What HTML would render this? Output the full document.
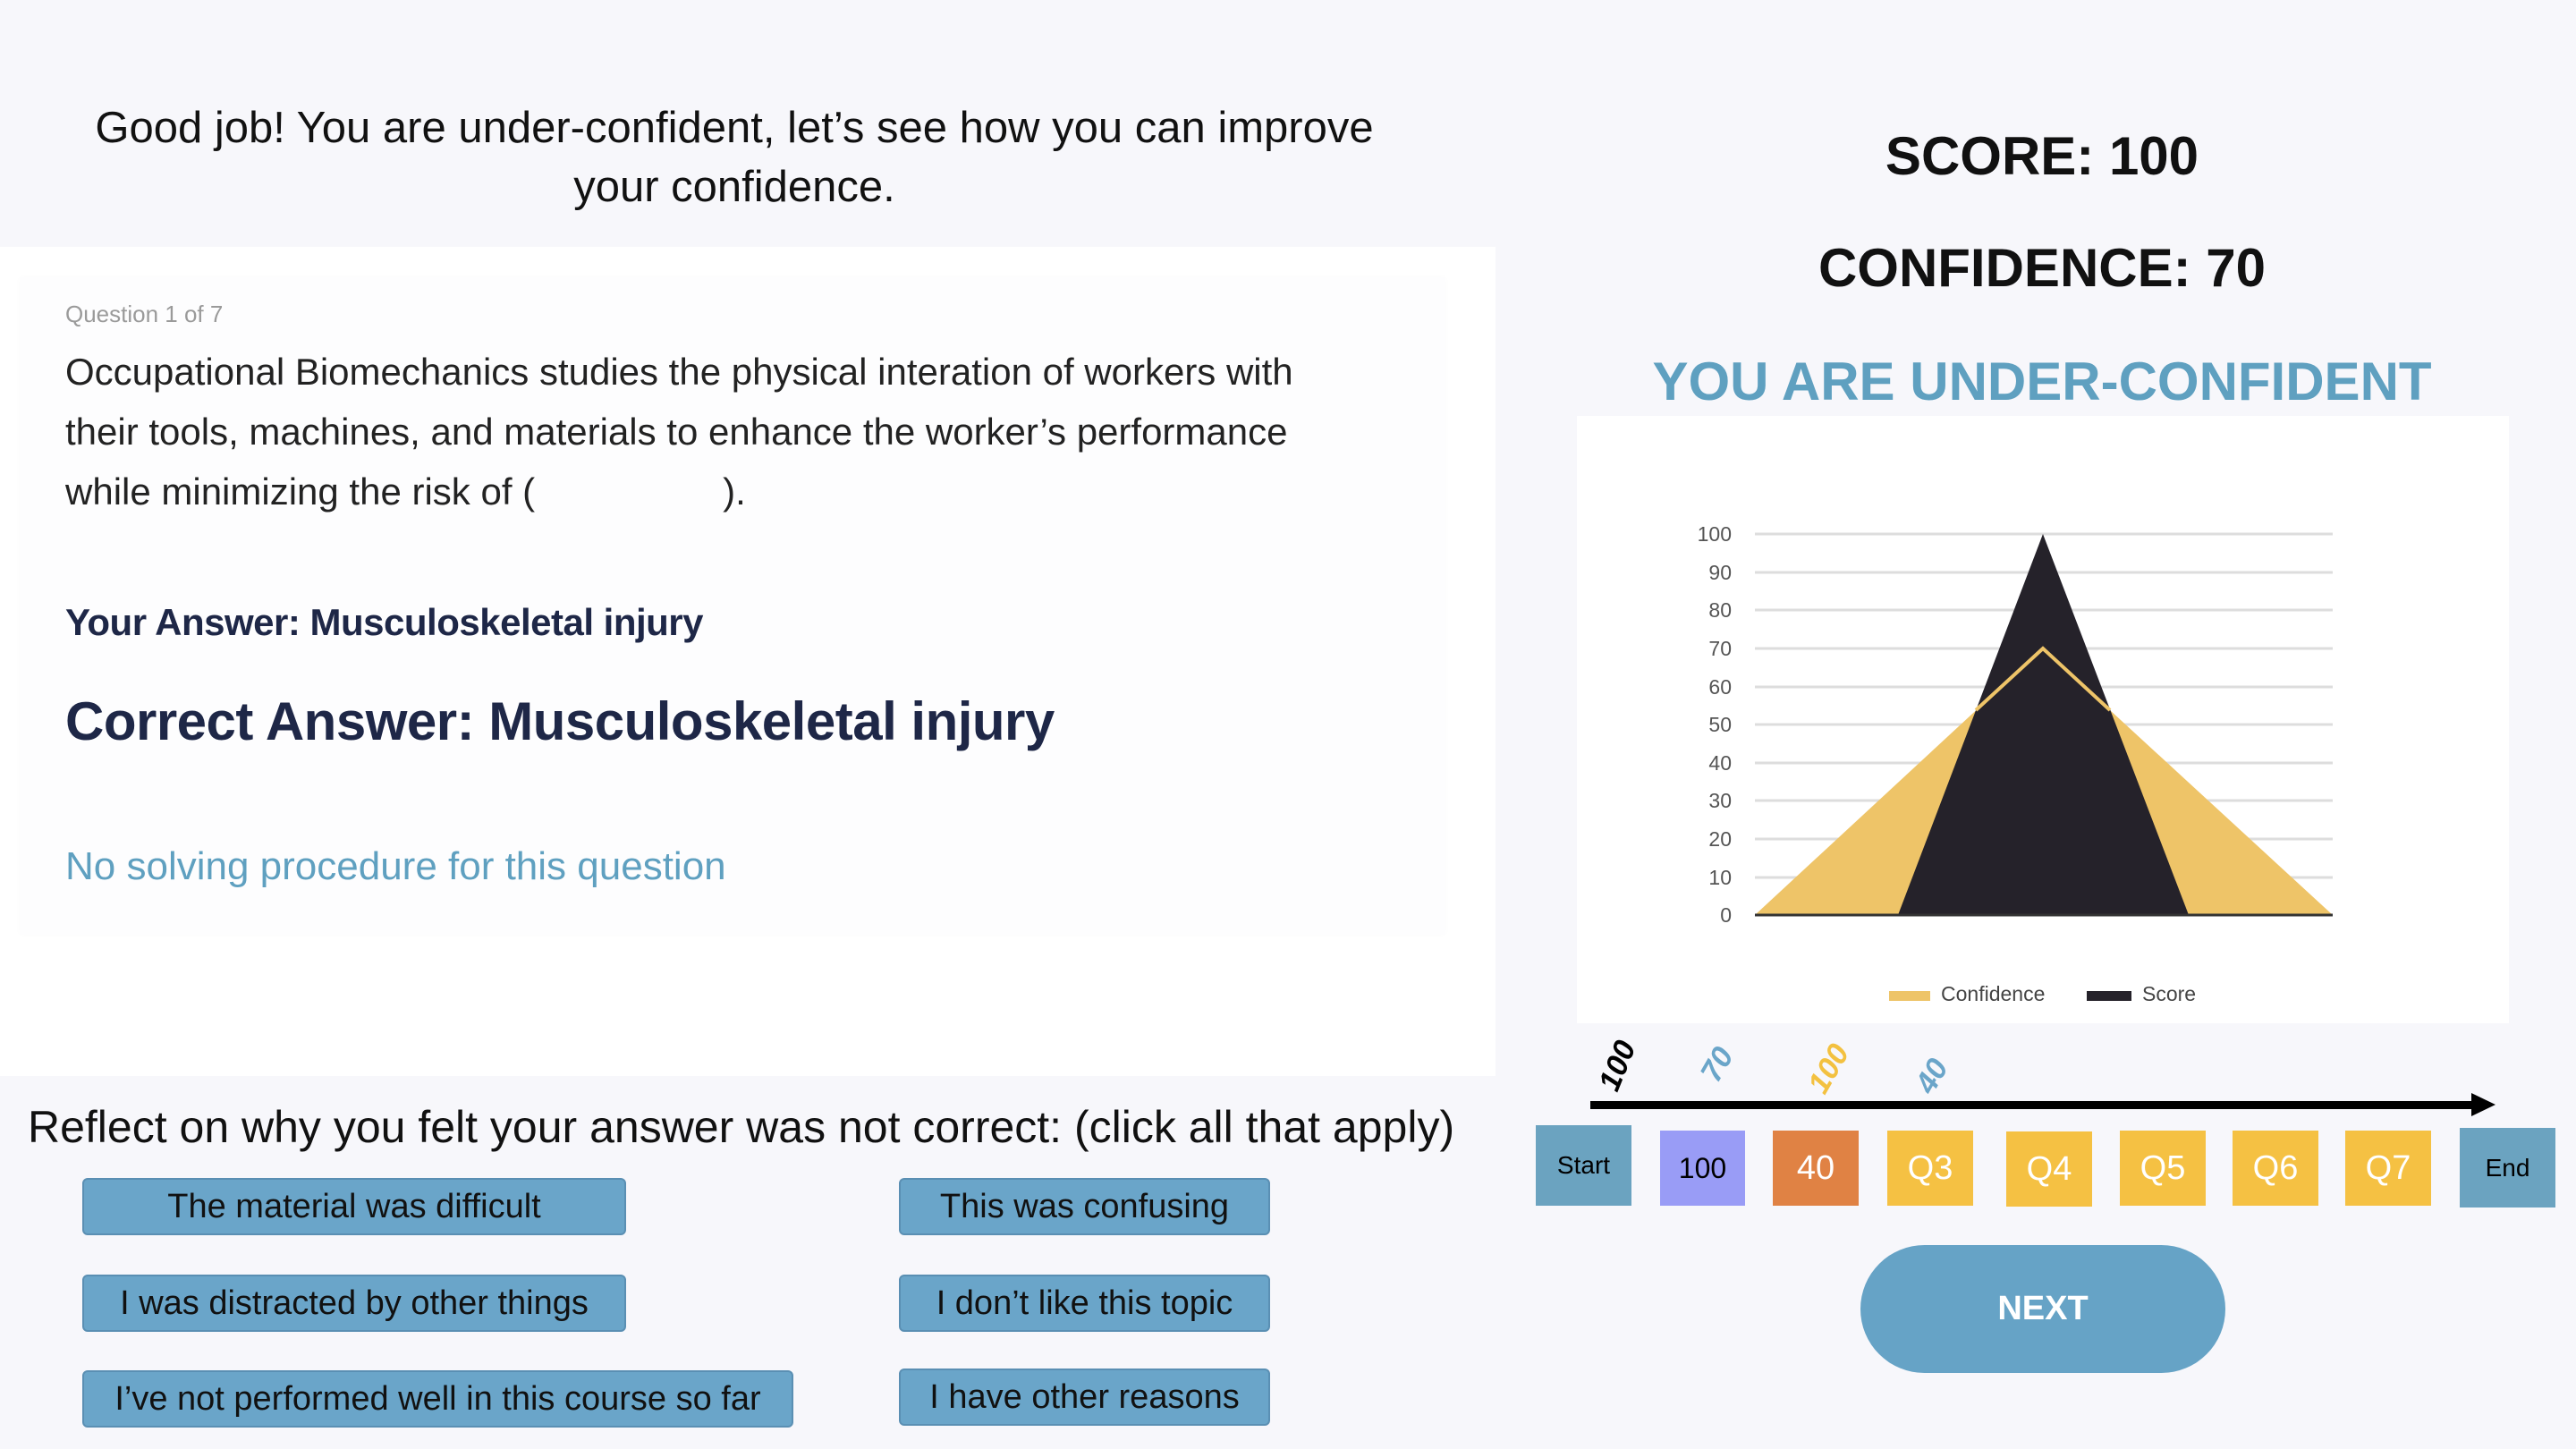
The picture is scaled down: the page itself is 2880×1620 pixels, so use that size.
<!DOCTYPE html>
<html><head><meta charset="utf-8"><style>
*{margin:0;padding:0;box-sizing:border-box}
body{width:2880px;height:1620px;background:#f7f7fb;position:relative;overflow:hidden;font-family:"Liberation Sans",sans-serif;color:#111}
.a{position:absolute;white-space:nowrap}
.btn{position:absolute;background:#6aa5c9;border:2px solid #5a8fb3;border-radius:6px;font-size:38px;color:#111;text-align:center;line-height:60px}
.box{position:absolute;font-size:38px;text-align:center;color:#fff}
</style></head><body>
<div class="a" style="left:0;top:110px;width:1642px;text-align:center;font-size:49px;line-height:66px;white-space:normal">Good job! You are under-confident, let’s see how you can improve<br>your confidence.</div>
<div class="a" style="left:0;top:276px;width:1672px;height:927px;background:#fff"></div>
<div class="a" style="left:22px;top:310px;width:1594px;height:735px;background:#fdfdfe;box-shadow:0 0 6px rgba(0,0,0,0.02)"></div>
<div class="a" style="left:73px;top:336px;font-size:26px;color:#9a9a9a">Question 1 of 7</div>
<div class="a" style="left:73px;top:382px;font-size:42px;line-height:67px;color:#222">Occupational Biomechanics studies the physical interation of workers with<br>their tools, machines, and materials to enhance the worker’s performance<br>while minimizing the risk of (&nbsp;&nbsp;&nbsp;&nbsp;&nbsp;&nbsp;&nbsp;&nbsp;&nbsp;&nbsp;&nbsp;&nbsp;&nbsp;&nbsp;&nbsp;&nbsp;&nbsp;&nbsp;).</div>
<div class="a" style="left:73px;top:672px;font-size:42px;font-weight:bold;color:#1e2747;letter-spacing:-0.5px">Your Answer: Musculoskeletal injury</div>
<div class="a" style="left:73px;top:772px;font-size:60px;font-weight:bold;color:#1e2747;letter-spacing:-0.5px">Correct Answer: Musculoskeletal injury</div>
<div class="a" style="left:73px;top:944px;font-size:44px;color:#5fa0c0">No solving procedure for this question</div>
<div class="a" style="left:31px;top:1231px;font-size:50px">Reflect on why you felt your answer was not correct: (click all that apply)</div>
<div class="btn" style="left:92px;top:1317px;width:608px;height:64px">The material was difficult</div>
<div class="btn" style="left:92px;top:1425px;width:608px;height:64px">I was distracted by other things</div>
<div class="btn" style="left:92px;top:1532px;width:795px;height:64px">I’ve not performed well in this course so far</div>
<div class="btn" style="left:1005px;top:1317px;width:415px;height:64px">This was confusing</div>
<div class="btn" style="left:1005px;top:1425px;width:415px;height:64px">I don’t like this topic</div>
<div class="btn" style="left:1005px;top:1530px;width:415px;height:64px">I have other reasons</div>

<div class="a" style="left:1740px;top:140px;width:1086px;text-align:center;font-size:60px;font-weight:bold">SCORE: 100</div>
<div class="a" style="left:1740px;top:265px;width:1086px;text-align:center;font-size:60px;font-weight:bold">CONFIDENCE: 70</div>
<div class="a" style="left:1740px;top:392px;width:1086px;text-align:center;font-size:60px;font-weight:bold;color:#5fa0c0">YOU ARE UNDER-CONFIDENT</div>
<div class="a" style="left:1763px;top:465px;width:1042px;height:679px;background:#fff"></div>
<svg class="a" style="left:0;top:0" width="2880" height="1620" font-family="Liberation Sans" >
<g stroke="#ddd" stroke-width="3">
<line x1="1962" x2="2608" y1="597" y2="597"/><line x1="1962" x2="2608" y1="640" y2="640"/><line x1="1962" x2="2608" y1="682" y2="682"/><line x1="1962" x2="2608" y1="725" y2="725"/><line x1="1962" x2="2608" y1="768" y2="768"/><line x1="1962" x2="2608" y1="810" y2="810"/><line x1="1962" x2="2608" y1="853" y2="853"/><line x1="1962" x2="2608" y1="895" y2="895"/><line x1="1962" x2="2608" y1="938" y2="938"/><line x1="1962" x2="2608" y1="981" y2="981"/>
</g>
<g font-size="23" fill="#555" text-anchor="end">
<text x="1936" y="605">100</text><text x="1936" y="648">90</text><text x="1936" y="690">80</text><text x="1936" y="733">70</text><text x="1936" y="776">60</text><text x="1936" y="818">50</text><text x="1936" y="861">40</text><text x="1936" y="903">30</text><text x="1936" y="946">20</text><text x="1936" y="989">10</text><text x="1936" y="1031">0</text>
</g>
<polygon points="1962,1023 2284,725 2608,1023" fill="#eec468"/>
<polygon points="2122,1023 2284,597 2447,1023" fill="#25222a"/>
<polyline points="2209,794 2284,725 2359,794" fill="none" stroke="#eec468" stroke-width="4"/>
<line x1="1962" x2="2608" y1="1023" y2="1023" stroke="#333" stroke-width="3"/>
<rect x="2112" y="1108" width="46" height="11" fill="#eec468"/>
<text x="2170" y="1119" font-size="23" fill="#444">Confidence</text>
<rect x="2333" y="1108" width="50" height="11" fill="#25222a"/>
<text x="2395" y="1119" font-size="23" fill="#444">Score</text>
<rect x="1778" y="1231" width="995" height="9" fill="#000"/>
<polygon points="2763,1222 2790,1235 2763,1248" fill="#000"/>
<g font-size="34" font-weight="bold" font-style="italic">
<text transform="translate(1808,1222) rotate(-68)" fill="#000">100</text>
<text transform="translate(1920,1212) rotate(-60)" fill="#6aa5c9">70</text>
<text transform="translate(2040,1225) rotate(-60)" fill="#f3c140">100</text>
<text transform="translate(2160,1225) rotate(-60)" fill="#6aa5c9">40</text>
</g>
</svg>
<div class="box" style="left:1717px;top:1258px;width:107px;height:90px;background:#6ba3c0;color:#000;font-size:28px;line-height:90px">Start</div>
<div class="box" style="left:1856px;top:1264px;width:95px;height:84px;background:#999cf6;color:#000;font-size:32px;line-height:84px">100</div>
<div class="box" style="left:1982px;top:1264px;width:96px;height:84px;background:#e08244;line-height:84px">40</div>
<div class="box" style="left:2110px;top:1264px;width:96px;height:84px;background:#f5c143;line-height:84px">Q3</div>
<div class="box" style="left:2243px;top:1265px;width:96px;height:84px;background:#f5c143;line-height:84px">Q4</div>
<div class="box" style="left:2370px;top:1264px;width:96px;height:84px;background:#f5c143;line-height:84px">Q5</div>
<div class="box" style="left:2496px;top:1264px;width:96px;height:84px;background:#f5c143;line-height:84px">Q6</div>
<div class="box" style="left:2622px;top:1264px;width:96px;height:84px;background:#f5c143;line-height:84px">Q7</div>
<div class="box" style="left:2750px;top:1261px;width:107px;height:89px;background:#6ba3c0;color:#000;font-size:28px;line-height:89px">End</div>
<div class="a" style="left:2080px;top:1392px;width:408px;height:143px;border-radius:72px;background:#66a3c6;color:#fff;font-size:38px;font-weight:bold;text-align:center;line-height:143px">NEXT</div>
</body></html>
